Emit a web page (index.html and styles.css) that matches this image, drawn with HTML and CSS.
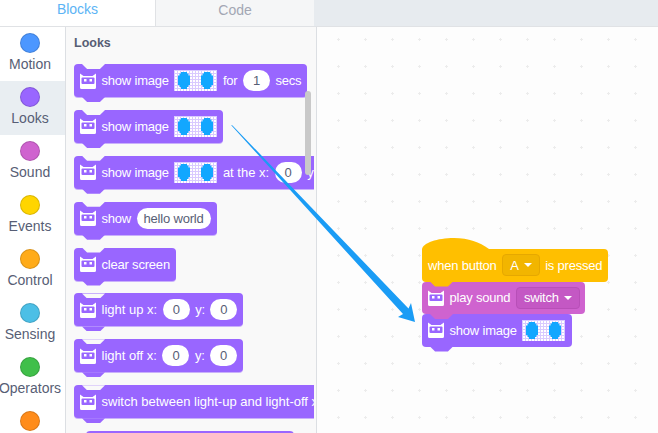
FILE: index.html
```html
<!DOCTYPE html>
<html lang="en">
<head>
    <meta charset="UTF-8">
    <title>Blocks</title>
    <link rel="stylesheet" href="styles.css">
</head>
<body>

    <!-- shared icons -->
    <svg class="defs" width="0" height="0">
        <defs>
            <pattern id="gridCell" width="3" height="3" patternUnits="userSpaceOnUse">
                <rect width="3" height="3" fill="#d9caff"/>
                <rect x="1" y="1" width="2" height="2" fill="#fff"/>
            </pattern>
        </defs>
        <symbol id="robot" viewBox="0 0 16 16">
            <path d="M0 0.500 3.500 3H12.500L16 0.500V14.500A1.500 1.500 0 0 1 14.500 16H1.500A1.500 1.500 0 0 1 0 14.500Z" fill="#fff"/>
            <rect x="1.500" y="4.500" width="13" height="6.500" rx="1" fill="#9966ff"/>
            <rect x="4" y="6" width="2.500" height="2.500" fill="#fff"/>
            <rect x="9.500" y="6" width="2.500" height="2.500" fill="#fff"/>
        </symbol>
        <symbol id="matrix" viewBox="0 0 43 21">
            <rect width="43" height="21" fill="url(#gridCell)"/>
            <path d="M7 2H13V3.500H14.500V5.500H16V15H14.500V17H13V19H7V17H5.500V15H4V5.500H5.500V3.500H7Z" fill="#12a7ff"/>
            <path d="M30 2H36V3.500H37.500V5.500H39V15H37.500V17H36V19H30V17H28.500V15H27V5.500H28.500V3.500H30Z" fill="#12a7ff"/>
        </symbol>
    </svg>

    <div class="app">
        <div class="tabs">
            <div class="tab">Blocks</div>
            <div class="tab">Code</div>
        </div>

        <div class="main">
            <nav class="sidebar">
                <div class="cat"><span class="dot dot-motion"></span>Motion</div>
                <div class="cat cat-active"><span class="dot dot-looks"></span>Looks</div>
                <div class="cat"><span class="dot dot-sound"></span>Sound</div>
                <div class="cat"><span class="dot dot-events"></span>Events</div>
                <div class="cat"><span class="dot dot-control"></span>Control</div>
                <div class="cat"><span class="dot dot-sensing"></span>Sensing</div>
                <div class="cat"><span class="dot dot-operators"></span>Operators</div>
                <div class="cat"><span class="dot dot-orange"></span></div>
            </nav>

            <section class="flyout">
                <div class="flyout-title">Looks</div>
                <div class="block-list">
                    <div class="block">
                        <svg class="robot"><use href="#robot"/></svg>
                        <span>show image</span>
                        <svg class="matrix"><use href="#matrix"/></svg>
                        <span>for</span>
                        <span class="pill">1</span>
                        <span>secs</span>
                    </div>
                    <div class="block">
                        <svg class="robot"><use href="#robot"/></svg>
                        <span>show image</span>
                        <svg class="matrix"><use href="#matrix"/></svg>
                    </div>
                    <div class="block">
                        <svg class="robot"><use href="#robot"/></svg>
                        <span>show image</span>
                        <svg class="matrix"><use href="#matrix"/></svg>
                        <span class="wide-text">at the x:</span>
                        <span class="pill">0</span>
                        <span>y:</span>
                    </div>
                    <div class="block">
                        <svg class="robot"><use href="#robot"/></svg>
                        <span>show</span>
                        <span class="pill">hello world</span>
                    </div>
                    <div class="block">
                        <svg class="robot"><use href="#robot"/></svg>
                        <span>clear screen</span>
                    </div>
                    <div class="block">
                        <svg class="robot"><use href="#robot"/></svg>
                        <span class="wide-text">light up x:</span>
                        <span class="pill">0</span>
                        <span>y:</span>
                        <span class="pill">0</span>
                    </div>
                    <div class="block">
                        <svg class="robot"><use href="#robot"/></svg>
                        <span class="wide-text">light off x:</span>
                        <span class="pill">0</span>
                        <span>y:</span>
                        <span class="pill">0</span>
                    </div>
                    <div class="block">
                        <svg class="robot"><use href="#robot"/></svg>
                        <span class="wide-text">switch between light-up and light-off x</span>
                    </div>
                    <div class="block block-last"></div>
                </div>
                <div class="scrollbar"></div>
            </section>

            <section class="workspace">
                <div class="stack">
                    <div class="block block-hat">
                        <span>when button</span>
                        <span class="drop drop-hat">A<i class="caret"></i></span>
                        <span>is pressed</span>
                    </div>
                    <div class="block block-sound">
                        <svg class="robot"><use href="#robot"/></svg>
                        <span>play sound</span>
                        <span class="drop drop-sound">switch<i class="caret"></i></span>
                    </div>
                    <div class="block block-show">
                        <svg class="robot"><use href="#robot"/></svg>
                        <span>show image</span>
                        <svg class="matrix"><use href="#matrix"/></svg>
                    </div>
                </div>
            </section>
        </div>

        <!-- annotation arrow drawn over the editor -->
        <svg class="arrow" width="658" height="433" viewBox="0 0 658 433">
            <path d="M231 125 232.500 125.500 408.500 308.500 411 303 415 322 398 317 403 314Z" fill="#1a9cf5"/>
        </svg>
    </div>

</body>
</html>
```

FILE: styles.css
```css
* {
    box-sizing: border-box;
}

body {
    margin: 0;
    font-family: "Liberation Sans", Arial, sans-serif;
    color: #575e75;
    background-color: #fff;
}

.defs {
    position: absolute;
}

.app {
    position: relative;
    width: 658px;
    height: 433px;
    overflow: hidden;
    display: flex;
    flex-direction: column;
}

/* top tabs */
.tabs {
    display: flex;
    height: 27px;
    flex-shrink: 0;
    background-color: #e7ebef;
    border-bottom: 1px solid #e0e2e5;
}

.tab {
    width: 159px;
    padding-bottom: 7px;
    display: flex;
    justify-content: center;
    align-items: center;
    font-size: 14px;
    color: #a3a7b4;
    background-color: #f5f6f7;
    border-left: 1px solid #e0e2e5;
}

.tab:first-child {
    width: 155px;
    padding-bottom: 9px;
    color: #5cb4f5;
    background-color: #fff;
    border-left: none;
}

.main {
    flex: 1;
    display: flex;
    min-height: 0;
}

/* category column */
.sidebar {
    width: 66px;
    flex-shrink: 0;
    background-color: #fff;
    border-right: 1px solid #dcdfe3;
}

.cat {
    height: 54px;
    padding: 6px 5px 0 0;
    display: flex;
    flex-direction: column;
    align-items: center;
    gap: 3px;
    font-size: 14px;
    line-height: 16px;
    white-space: nowrap;
}

.cat-active {
    background-color: #e9eef2;
}

.dot {
    width: 20px;
    height: 20px;
    flex-shrink: 0;
    border-radius: 50%;
    border: 1px solid rgba(0, 0, 0, 0.15);
}

.dot-motion { background-color: #4c97ff; }
.dot-looks { background-color: #9966ff; }
.dot-sound { background-color: #cf63cf; }
.dot-events { background-color: #ffd500; }
.dot-control { background-color: #ffab19; }
.dot-sensing { background-color: #4cbfe6; }
.dot-operators { background-color: #40bf4a; }
.dot-orange { background-color: #ff8c1a; }

/* block palette */
.flyout {
    position: relative;
    width: 251px;
    flex-shrink: 0;
    padding-left: 8px;
    overflow: hidden;
    background-color: #f9f9f9;
    border-right: 1px solid #dcdfe3;
}

.flyout-title {
    margin-top: 9px;
    height: 14px;
    font-size: 12.500px;
    line-height: 14px;
    font-weight: bold;
}

.block-list {
    width: 240px;
    height: 400px;
    margin-top: 14px;
    display: flex;
    flex-direction: column;
    align-items: flex-start;
    gap: 12.900px;
    overflow: hidden;
}

.block {
    position: relative;
    height: 33px;
    padding: 0 6px;
    display: inline-flex;
    flex-shrink: 0;
    align-items: center;
    gap: 5.500px;
    font-size: 13px;
    letter-spacing: -0.2px;
    white-space: nowrap;
    color: #fff;
    background-color: #9966ff;
    border-radius: 4px;
    box-shadow: 0 1px 0 #c9b0fb;
}

.wide-text {
    letter-spacing: 0;
}

/* notch on top, tab below */
.block::before {
    content: "";
    position: absolute;
    top: 0;
    left: 8px;
    width: 23px;
    height: 5px;
    background-color: #f9f9f9;
    clip-path: polygon(0 0, 100% 0, 78% 100%, 22% 100%);
}

.block::after {
    content: "";
    position: absolute;
    bottom: -5px;
    left: 8px;
    width: 23px;
    height: 5px;
    background-color: inherit;
    clip-path: polygon(0 0, 100% 0, 78% 100%, 22% 100%);
}

.block-last {
    width: 208px;
    margin-left: 12px;
}

.block-last::before {
    display: none;
}

.robot {
    width: 16px;
    height: 16px;
    flex-shrink: 0;
}

.matrix {
    width: 43px;
    height: 21px;
    flex-shrink: 0;
}

.pill {
    min-width: 27px;
    height: 21px;
    padding: 0 7px;
    display: inline-flex;
    flex-shrink: 0;
    justify-content: center;
    align-items: center;
    color: #575e75;
    background-color: #fff;
    border-radius: 11px;
}

.scrollbar {
    position: absolute;
    top: 64px;
    left: 239px;
    width: 6px;
    height: 84px;
    background-color: #c9c9c9;
    border-radius: 3px;
}

/* script area */
.workspace {
    position: relative;
    flex: 1;
    background-color: #fdfdfd;
    background-image: radial-gradient(circle, #ececec 1px, transparent 1.200px);
    background-size: 27px 27px;
    background-position: 8px -1px;
}

.stack {
    position: absolute;
    top: 222px;
    left: 105px;
    display: flex;
    flex-direction: column;
    align-items: flex-start;
}

.stack .block {
    height: 32.500px;
    box-shadow: none;
}

.stack .block::before {
    background-color: transparent;
}

.block-hat {
    z-index: 3;
    width: 186px;
    background-color: #ffbf00;
}

/* hat dome replaces the notch */
.stack .block-hat::before {
    top: -11px;
    left: 0;
    width: 67px;
    height: 15px;
    background-color: #ffbf00;
    clip-path: path("M0 15 V11 C1 5 15 0 32 0 C47 0 57 4 67 11 V15 Z");
}

.block-hat span {
    position: relative;
}

.block-sound {
    z-index: 2;
    width: 163px;
    background-color: #cf63cf;
}

.block-show {
    z-index: 1;
    width: 150px;
}

.drop {
    height: 22px;
    padding: 0 7px;
    display: inline-flex;
    align-items: center;
    gap: 5px;
    border-radius: 4px;
}

.drop-hat {
    background-color: #f2b500;
    border: 1px solid #e6a800;
}

.drop-sound {
    background-color: #c458c4;
    border: 1px solid #b84fb8;
}

.caret {
    width: 0;
    height: 0;
    border-left: 4px solid transparent;
    border-right: 4px solid transparent;
    border-top: 4px solid #fff;
}

.arrow {
    position: absolute;
    top: 0;
    left: 0;
}
```
